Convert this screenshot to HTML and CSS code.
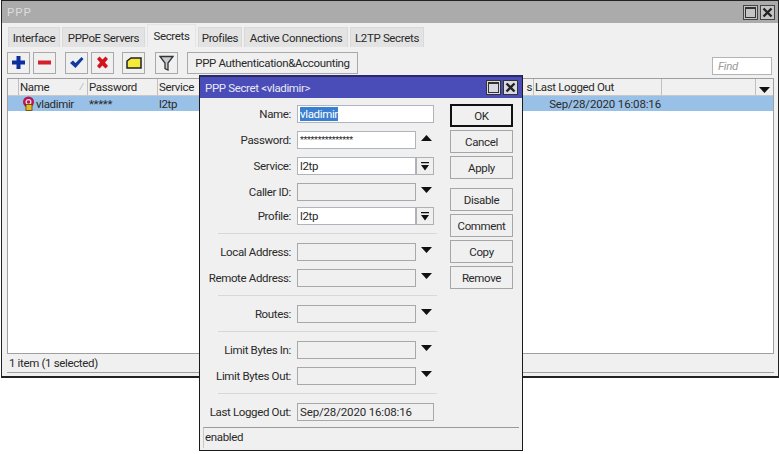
FILE: index.html
```html
<!DOCTYPE html>
<html lang="en">
<head>
<meta charset="utf-8">
<title>PPP</title>
<link rel="stylesheet" href="styles.css">
</head>
<body>
<div class="win">
  <div class="titlebar">
    <span class="title">PPP</span>
    <span class="wbtns">
      <span class="wbtn"><svg width="11" height="11" viewBox="0 0 11 11"><rect x="0.5" y="0.5" width="10" height="10" fill="none" stroke="#333" stroke-width="1"/><rect x="0" y="0" width="11" height="2" fill="#333"/></svg></span>
      <span class="wbtn"><svg width="11" height="11" viewBox="0 0 11 11"><path d="M1.5 1.5l8 8M9.5 1.5l-8 8" stroke="#222" stroke-width="2.4"/></svg></span>
    </span>
  </div>
  <div class="tabs">
    <span class="tab t1">Interface</span>
    <span class="tab t2">PPPoE Servers</span>
    <span class="tab active t3">Secrets</span>
    <span class="tab t4">Profiles</span>
    <span class="tab t5">Active Connections</span>
    <span class="tab t6">L2TP Secrets</span>
  </div>
  <div class="toolbar">
    <span class="tool"><svg width="15" height="15" viewBox="0 0 15 15"><path d="M5.500 1h4v4.500H14v4H9.500V14h-4V9.500H1v-4h4.500z" fill="#0b2f9c"/></svg></span>
    <span class="tool"><svg width="15" height="15" viewBox="0 0 15 15"><rect x="1" y="5.500" width="13" height="4" fill="#d3202a"/></svg></span>
    <span class="tool gap-l"><svg width="15" height="15" viewBox="0 0 15 15"><path d="M1 8l3-2.500 2.500 2.500L12.500 2 14.500 4 6.500 13z" fill="#123a9e"/></svg></span>
    <span class="tool"><svg width="15" height="15" viewBox="0 0 15 15"><path d="M2 4l2.500-2.500 3 3 3-3L13 4l-3 3.500 3 3.500-2.500 2.500-3-3-3 3L2 11l3-3.500z" fill="#d3141c"/></svg></span>
    <span class="tool gap-m"><svg width="16" height="12" viewBox="0 0 16 12"><path d="M1 4L5 1h10v10H1z" fill="#f5ea3a" stroke="#222" stroke-width="1.500"/></svg></span>
    <span class="tool gap-n"><svg width="15" height="16" viewBox="0 0 15 16"><path d="M1 1.500h13L9 8v7L6 13.500V8z" fill="#c9ced3" stroke="#333" stroke-width="1.300"/></svg></span>
    <span class="tool wide">PPP Authentication&amp;Accounting</span>
    <span class="find">Find</span>
  </div>
  <div class="table">
    <div class="thead">
      <span class="th c0"></span>
      <span class="th c1">Name<i class="sort">/</i></span>
      <span class="th c2">Password</span>
      <span class="th c3">Service</span>
      <span class="th c4">s</span>
      <span class="th c5">Last Logged Out</span>
      <span class="th c6"></span>
      <span class="th c7"><svg width="11" height="6" viewBox="0 0 11 6"><path d="M0 0h11L5.500 6z" fill="#111"/></svg></span>
    </div>
    <div class="trow">
      <span class="td c0"></span>
      <span class="td c1 withicon"><svg width="13" height="15" viewBox="0 0 13 15"><circle cx="6.500" cy="6" r="5.500" fill="#b5174f"/><circle cx="6.500" cy="6" r="2.400" fill="none" stroke="#f4d7e2" stroke-width="1.300"/><rect x="4" y="8.500" width="6" height="6" fill="#e9b92c" stroke="#5a4200" stroke-width="0.800"/></svg>vladimir</span>
      <span class="td c2">*****</span>
      <span class="td c3">l2tp</span>
      <span class="td c4"></span>
      <span class="td c5 right date">Sep/28/2020 16:08:16</span>
      <span class="td c6"></span>
      <span class="td c7"></span>
    </div>
  </div>
  <div class="status">1 item (1 selected)</div>
</div>

<div class="dialog">
  <div class="dtitle">
    <span>PPP Secret &lt;vladimir&gt;</span>
    <span class="dbtns">
      <span class="dbtn"><svg width="11" height="11" viewBox="0 0 11 11"><rect x="0.500" y="0.500" width="10" height="10" fill="none" stroke="#333"/><rect width="11" height="2" fill="#333"/></svg></span>
      <span class="dbtn"><svg width="11" height="11" viewBox="0 0 11 11"><path d="M1.500 1.500l8 8M9.500 1.500l-8 8" stroke="#222" stroke-width="2.400"/></svg></span>
    </span>
  </div>
  <div class="dbody">
    <div class="form">
      <div class="frow"><label>Name:</label><span class="input full on"><mark>vladimir</mark></span></div>
      <div class="frow"><label>Password:</label><span class="input on pw">***************</span><svg class="arrow" width="11" height="6" viewBox="0 0 11 6"><path d="M0 6h11L5.500 0z" fill="#111"/></svg></div>
      <div class="frow"><label>Service:</label><span class="input on">l2tp</span><span class="dd"><svg width="8" height="9" viewBox="0 0 8 9"><path d="M0 0h8v1.300H0zM0 3h8L4 8.500z" fill="#111"/></svg></span></div>
      <div class="frow tight"><label>Caller ID:</label><span class="input"></span><svg class="arrow" width="11" height="6" viewBox="0 0 11 6"><path d="M0 0h11L5.500 6z" fill="#111"/></svg></div>
      <div class="frow"><label>Profile:</label><span class="input on">l2tp</span><span class="dd"><svg width="8" height="9" viewBox="0 0 8 9"><path d="M0 0h8v1.300H0zM0 3h8L4 8.500z" fill="#111"/></svg></span></div>
      <hr class="sep">
      <div class="frow"><label>Local Address:</label><span class="input"></span><svg class="arrow" width="11" height="6" viewBox="0 0 11 6"><path d="M0 0h11L5.500 6z" fill="#111"/></svg></div>
      <div class="frow"><label>Remote Address:</label><span class="input"></span><svg class="arrow" width="11" height="6" viewBox="0 0 11 6"><path d="M0 0h11L5.500 6z" fill="#111"/></svg></div>
      <hr class="sep">
      <div class="frow"><label>Routes:</label><span class="input"></span><svg class="arrow" width="11" height="6" viewBox="0 0 11 6"><path d="M0 0h11L5.500 6z" fill="#111"/></svg></div>
      <hr class="sep">
      <div class="frow"><label>Limit Bytes In:</label><span class="input"></span><svg class="arrow" width="11" height="6" viewBox="0 0 11 6"><path d="M0 0h11L5.500 6z" fill="#111"/></svg></div>
      <div class="frow"><label>Limit Bytes Out:</label><span class="input"></span><svg class="arrow" width="11" height="6" viewBox="0 0 11 6"><path d="M0 0h11L5.500 6z" fill="#111"/></svg></div>
      <hr class="sep">
      <div class="frow"><label>Last Logged Out:</label><span class="input full date">Sep/28/2020 16:08:16</span></div>
    </div>
    <div class="actions">
      <span class="btn default">OK</span>
      <span class="btn">Cancel</span>
      <span class="btn">Apply</span>
      <span class="btn spaced">Disable</span>
      <span class="btn">Comment</span>
      <span class="btn">Copy</span>
      <span class="btn">Remove</span>
    </div>
  </div>
  <div class="dstatus">enabled</div>
</div>
</body>
</html>
```
FILE: styles.css
```css
* { box-sizing: border-box; }
html, body { margin: 0; padding: 0; background: #fff; }
body {
  width: 779px;
  height: 454px;
  overflow: hidden;
  position: relative;
  font: 11.5px/14px Roboto, "Liberation Sans", Arial, sans-serif;
  letter-spacing: -0.35px;
  color: #2a2a2a;
}
.date { letter-spacing: -0.15px; }
.win {
  margin-left: 1px;
  width: 778px;
  height: 378px;
  display: flex;
  flex-direction: column;
  background: #f0f0f0;
  border: 1px solid #222;
  border-width: 1px 1px 2px 1px;
}
.titlebar {
  height: 22px;
  background: #ababab;
  display: flex;
  align-items: center;
  justify-content: space-between;
  padding: 0 3px 0 5px;
  flex: none;
}
.title { color: #dcdcdc; letter-spacing: 1px; }
.wbtns { display: flex; gap: 2px; }
.wbtn {
  width: 15px;
  height: 15px;
  border: 1px solid #444;
  background: #c4c4c4;
  display: flex;
  align-items: center;
  justify-content: center;
}
.tabs {
  height: 24px;
  flex: none;
  display: flex;
  align-items: flex-end;
  gap: 2px;
  padding-left: 6px;
}
.tab {
  height: 20px;
  padding-top: 1px;
  background: #e3e3e3;
  border: 1px solid #d9d9d9;
  border-bottom: 0;
  display: flex;
  align-items: center;
  justify-content: center;
  flex: none;
  white-space: nowrap;
}
.tab.active { height: 23px; padding-top: 0; background: #f0f0f0; border-color: #e4e4e4; }
.t1 { width: 52px; }
.t2 { width: 83px; }
.t3 { width: 49px; }
.t4 { width: 44px; }
.t5 { width: 104px; }
.t6 { width: 74px; }
.toolbar {
  height: 31px;
  flex: none;
  display: flex;
  align-items: center;
  gap: 3px;
  padding: 0 6px 0 5px;
}
.tool {
  width: 23px;
  height: 22px;
  border: 1px solid #a9a9a9;
  background: #f0f0f0;
  display: flex;
  align-items: center;
  justify-content: center;
  flex: none;
}
.gap-l { margin-left: 6px; }
.gap-m { margin-left: 5px; }
.gap-n { margin-left: 7px; }
.tool.wide { width: 171px; margin-left: 6px; white-space: nowrap; }
.find {
  margin-left: auto;
  margin-top: 7px;
  width: 60px;
  height: 18px;
  background: #fff;
  border: 1px solid #b4b4b4;
  color: #9a9a9a;
  font-style: italic;
  padding: 1px 0 0 5px;
}
.table {
  flex: 1;
  margin: 0 4px 0 5px;
  background: #fff;
  border: 1px solid #a0a0a0;
  border-bottom: 0;
  min-height: 0;
}
.thead { display: flex; height: 17px; background: #f0f0f0; border-bottom: 1px solid #c8c8c8; }
.trow { display: flex; height: 15px; background: #99c1e8; }
.th { border-right: 1px solid #c0c0c0; padding: 1px 0 0 1px; position: relative; flex: none; }
.td { padding: 1px 0 0 1px; flex: none; white-space: nowrap; }
.c0 { width: 11px; }
.c1 { width: 69px; }
.c2 { width: 70px; }
.c3 { width: 224px; }
.c4 { width: 152px; overflow: hidden; text-align: right; padding-right: 1px; }
.c5 { width: 128px; }
.c6 { width: 94px; }
.c7 { width: 17px; border-right: 0; padding: 3px 0 0 3px; }
.td.c4 { padding: 0; }
.right { text-align: right; padding-right: 1px; }
.sort { position: absolute; right: 4px; top: 1px; color: #b0b0b0; font-size: 9px; }
.withicon { display: flex; align-items: center; gap: 1px; padding: 0 0 0 3px; }
.status {
  height: 20px;
  flex: none;
  margin: 0 4px 3px 5px;
  border: 1px solid #a0a0a0;
  border-width: 1px 0;
  padding: 2px 0 0 2px;
  background: #f0f0f0;
}
.dialog {
  position: absolute;
  left: 199px;
  top: 75px;
  width: 324px;
  height: 376px;
  background: #f0f0f0;
  border: 1px solid #1a1a1a;
  border-top: 2px solid #2a2a6a;
  display: flex;
  flex-direction: column;
}
.dtitle {
  height: 21px;
  flex: none;
  background: #4a4db8;
  color: #e8e8f4;
  display: flex;
  align-items: center;
  justify-content: space-between;
  padding: 0 4px 0 5px;
}
.dbtns { display: flex; gap: 2px; }
.dbtn {
  width: 15px;
  height: 15px;
  background: #d9d9e4;
  border: 1px solid #333;
  display: flex;
  align-items: center;
  justify-content: center;
}
.dbody { flex: 1; display: flex; padding: 6px 0 0 0; min-height: 0; }
.form { width: 250px; flex: none; padding-top: 1px; }
.frow { display: flex; align-items: center; height: 18px; margin-bottom: 8px; }
.frow.tight { margin-bottom: 6px; }
label { width: 91px; margin-right: 6px; text-align: right; flex: none; white-space: nowrap; }
.input {
  width: 119px;
  height: 18px;
  background: #f0f0f0;
  border: 1px solid #a8a8a8;
  padding: 1px 0 0 2px;
  white-space: nowrap;
  flex: none;
}
.input.on { background: #fff; border-color: #b0b4bc; }
.input.full { width: 137px; }
.pw { font-size: 9px; line-height: 14px; }
mark { background: #3a7fd0; color: #fff; }
.arrow { margin-left: 5px; margin-top: -4px; flex: none; }
.dd {
  width: 18px;
  height: 18px;
  border: 1px solid #b0b0b0;
  display: flex;
  align-items: center;
  justify-content: center;
  flex: none;
}
.sep {
  margin: 0 0 9px 18px;
  width: 219px;
  height: 1px;
  border: 0;
  background: #d8d8d8;
}
.actions { display: flex; flex-direction: column; gap: 3px; flex: none; width: 63px; }
.btn {
  height: 23px;
  border: 1px solid #a6a6a6;
  background: #f0f0f0;
  display: flex;
  align-items: center;
  justify-content: center;
  flex: none;
}
.btn.default { border: 2px solid #111; }
.btn.spaced { margin-top: 6px; }
.dstatus {
  height: 21px;
  flex: none;
  margin: 0 3px 2px 3px;
  border-top: 1px solid #9a9a9a;
  border-left: 1px solid #c8c8c8;
  padding: 2px 0 0 1px;
}
```
